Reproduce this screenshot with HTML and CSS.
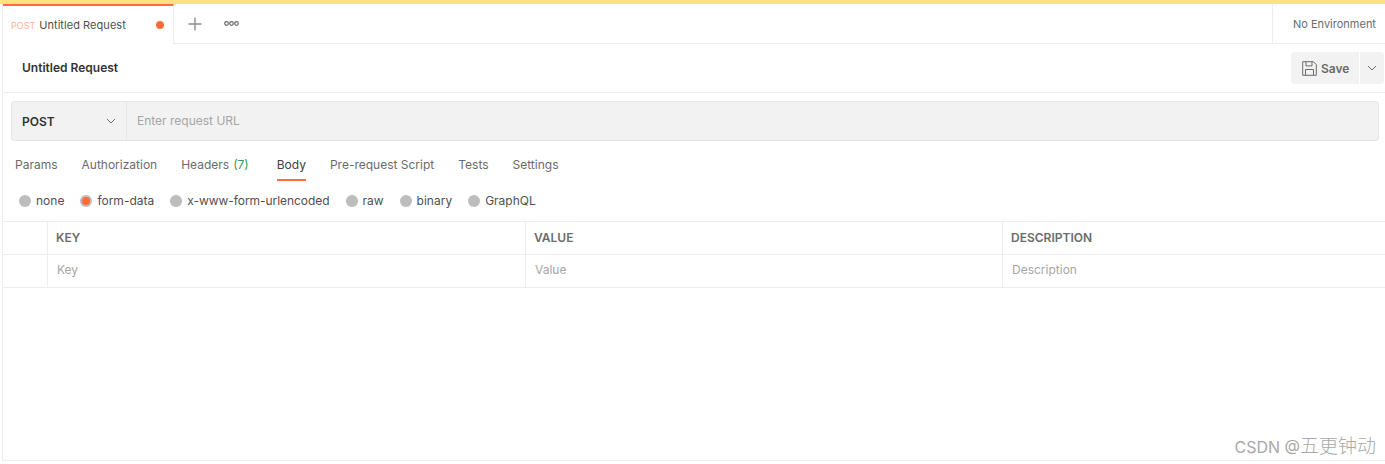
FILE: index.html
```html
<!DOCTYPE html>
<html lang="en">
<head>
    <meta charset="UTF-8">
    <meta name="viewport" content="width=device-width, initial-scale=1.0">
    <title>Untitled Request</title>
    <link rel="stylesheet" href="styles.css">
</head>
<body>

<div class="top-stripe"></div>

<div class="app">
    <div class="tab-bar">
        <div class="tab">
            <span class="tab-method">POST</span>
            <span class="tab-name">Untitled Request</span>
            <span class="tab-dot"></span>
        </div>
        <button type="button" class="icon-btn add-btn" aria-label="New tab">
            <svg width="14" height="14" viewBox="0 0 14 14"><path d="M7 0.5v13M0.5 7h13" stroke="#8c8c8c" stroke-width="1.4" fill="none"/></svg>
        </button>
        <button type="button" class="icon-btn more-btn" aria-label="More">
            <svg width="15" height="5" viewBox="0 0 15 5"><g stroke="#6b6b6b" stroke-width="1.2" fill="none"><circle cx="2.5" cy="2.5" r="1.8"/><circle cx="7.5" cy="2.5" r="1.8"/><circle cx="12.5" cy="2.5" r="1.8"/></g></svg>
        </button>
        <div class="env">No Environment</div>
    </div>

    <div class="title-row">
        <h1 class="title">Untitled Request</h1>
        <div class="save-group">
            <button type="button" class="save-btn">
                <svg width="15" height="15" viewBox="0 0 15 15"><path d="M1 .7h10.4L14.3 3.6V14.3H.7V.7zM4 .9v4h6v-4M3.5 14.2V8.5h8v5.7" stroke="#6b6b6b" stroke-width="1" fill="none"/></svg>
                Save
            </button>
            <button type="button" class="save-more" aria-label="Save options">
                <svg width="10" height="6" viewBox="0 0 10 6"><path d="M1 1l4 4 4-4" stroke="#6b6b6b" stroke-width="1" fill="none"/></svg>
            </button>
        </div>
    </div>

    <div class="url-row">
        <div class="url-box">
            <div class="method-select">
                <span>POST</span>
                <svg width="10" height="6" viewBox="0 0 10 6"><path d="M1 1l4 4 4-4" stroke="#6b6b6b" stroke-width="1" fill="none"/></svg>
            </div>
            <div class="url-input">Enter request URL</div>
        </div>
    </div>

    <nav class="req-tabs">
        <a class="req-tab">Params</a>
        <a class="req-tab">Authorization</a>
        <a class="req-tab headers-tab">Headers <span class="count">(7)</span></a>
        <a class="req-tab active">Body</a>
        <a class="req-tab">Pre-request Script</a>
        <a class="req-tab">Tests</a>
        <a class="req-tab">Settings</a>
    </nav>

    <div class="body-types">
        <label class="body-type"><span class="radio"></span>none</label>
        <label class="body-type"><span class="radio checked"></span>form-data</label>
        <label class="body-type urlencoded"><span class="radio"></span>x-www-form-urlencoded</label>
        <label class="body-type"><span class="radio"></span>raw</label>
        <label class="body-type"><span class="radio"></span>binary</label>
        <label class="body-type"><span class="radio"></span>GraphQL</label>
    </div>

    <div class="grid head">
        <div class="cell"></div>
        <div class="cell">KEY</div>
        <div class="cell">VALUE</div>
        <div class="cell">DESCRIPTION</div>
    </div>
    <div class="grid placeholder">
        <div class="cell"></div>
        <div class="cell">Key</div>
        <div class="cell">Value</div>
        <div class="cell">Description</div>
    </div>
</div>

<div class="watermark"><span class="wm-latin">CSDN @</span>五更钟动</div>

</body>
</html>
```

FILE: styles.css
```css
* {
    box-sizing: border-box;
}

html,
body {
    height: 100%;
}

body {
    margin: 0;
    background-color: #fff;
    font-family: 'Inter', 'Noto Sans CJK SC', sans-serif;
    font-size: 12px;
    color: #6b6b6b;
    overflow: hidden;
    position: relative;
}

.top-stripe {
    height: 4px;
    background-color: #fde27f;
}

.app {
    margin-left: 2px;
    height: 457px;
    border-left: 1px solid #ededed;
    border-bottom: 1px solid #ededed;
}

.tab-bar {
    display: flex;
    align-items: center;
    height: 40px;
    border-bottom: 1px solid #ededed;
}

.tab {
    display: flex;
    align-items: center;
    width: 171px;
    height: 40px;
    padding: 1px 9px 0 8px;
    border-top: 2px solid #ff6c37;
    border-right: 1px solid #ededed;
    background-color: #fff;
}

.tab-method {
    font-size: 9px;
    color: #ffb199;
    margin-right: 4px;
}

.tab-name {
    font-size: 11px;
    letter-spacing: 0.05px;
    color: #505050;
}

.tab-dot {
    width: 8px;
    height: 8px;
    margin-left: auto;
    border-radius: 50%;
    background-color: #ff6c37;
}

.icon-btn {
    display: flex;
    padding: 0;
    border: none;
    background: none;
}

.add-btn {
    margin-left: 14px;
}

.more-btn {
    margin-left: 22px;
}

.env {
    display: flex;
    align-items: center;
    margin-left: auto;
    width: 113px;
    height: 39px;
    padding-left: 20px;
    border-left: 1px solid #ededed;
    font-size: 11px;
    color: #6b6b6b;
}

.title-row {
    display: flex;
    align-items: center;
    justify-content: space-between;
    height: 49px;
    padding: 0 1px 0 19px;
    border-bottom: 1px solid #ededed;
}

.title {
    margin: 0 0 2px;
    font-size: 12px;
    font-weight: 600;
    color: #333;
}

.save-group {
    display: flex;
    gap: 1px;
    height: 32px;
}

.save-btn {
    display: flex;
    align-items: center;
    gap: 4px;
    width: 68px;
    padding: 0 0 0 11px;
    border: none;
    border-radius: 4px 0 0 4px;
    background-color: #f2f2f2;
    font-family: inherit;
    font-size: 12px;
    font-weight: 600;
    color: #6b6b6b;
}

.save-more {
    display: flex;
    align-items: center;
    justify-content: center;
    width: 24px;
    padding: 0;
    border: none;
    border-radius: 0 4px 4px 0;
    background-color: #f2f2f2;
}

.url-row {
    padding: 8px 6px 0 8px;
}

.url-box {
    display: flex;
    height: 40px;
    border: 1px solid #e6e6e6;
    border-radius: 3px;
    background-color: #f2f2f2;
}

.method-select {
    display: flex;
    align-items: center;
    justify-content: space-between;
    width: 115px;
    padding: 0 10px;
    border-right: 1px solid #e6e6e6;
    font-size: 12px;
    font-weight: 600;
    color: #333;
}

.url-input {
    display: flex;
    align-items: center;
    padding: 0 0 1px 10px;
    color: #a6a6a6;
}

.req-tabs {
    display: flex;
    gap: 24px;
    height: 40px;
    padding: 0 0 0 12px;
}

.req-tab {
    display: flex;
    align-items: center;
    gap: 3px;
    height: 40px;
    padding-top: 8px;
    color: #6b6b6b;
    border-bottom: 2px solid transparent;
}

.headers-tab {
    gap: 4px;
    margin-right: 4px;
}

.req-tab.active {
    color: #404040;
    border-bottom-color: #ff6c37;
}

.count {
    color: #1f9d55;
}

.body-types {
    display: flex;
    gap: 16px;
    align-items: center;
    height: 40px;
    padding: 0 0 1px 16px;
    color: #505050;
}

.body-type {
    display: flex;
    align-items: center;
    gap: 5px;
}

.urlencoded {
    letter-spacing: -0.05px;
}

.radio {
    width: 12px;
    height: 12px;
    border-radius: 50%;
    background-color: #bdbdbd;
    display: flex;
    align-items: center;
    justify-content: center;
}

.radio.checked::after {
    content: "";
    width: 8px;
    height: 8px;
    border-radius: 50%;
    background-color: #ff6c37;
}

.grid {
    display: grid;
    grid-template-columns: 44px 478px 477px 1fr;
    height: 33px;
    border-bottom: 1px solid #ededed;
}

.grid.head {
    height: 34px;
    border-top: 1px solid #ededed;
    font-weight: 600;
}

.cell {
    display: flex;
    align-items: center;
    padding: 0 0 2px 8px;
    border-left: 1px solid #ededed;
}

.cell:first-child {
    border-left: none;
}

.placeholder .cell {
    padding: 0 0 3px 9px;
    color: #a6a6a6;
}

.watermark {
    position: absolute;
    right: 9px;
    bottom: 6px;
    font-size: 19px;
    font-weight: 300;
    color: #a8a8a8;
}

.wm-latin {
    font-size: 16px;
    font-weight: 400;
}
```
